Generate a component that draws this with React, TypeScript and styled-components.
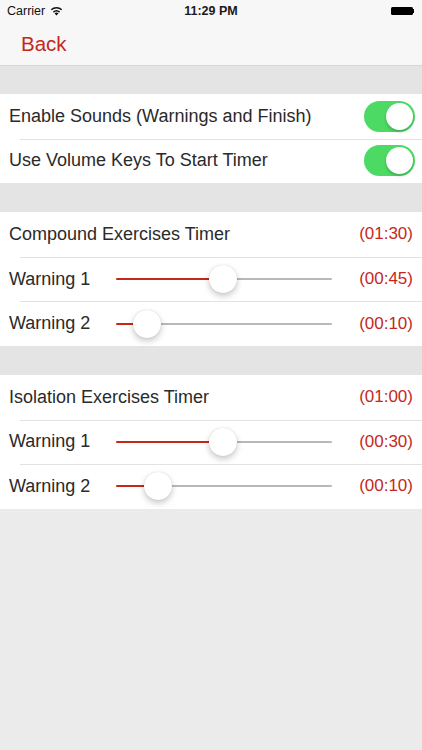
import React from 'react'
import styled, { createGlobalStyle } from 'styled-components'

const RED = '#c4281c'
const FONT = '"Liberation Sans", Arial, sans-serif'

const GlobalStyle = createGlobalStyle`
  html, body { margin: 0; padding: 0; background: #ebebeb; }
  body { font-family: ${FONT}; -webkit-font-smoothing: antialiased; }
`

const Page = styled.div`
  width: 422px;
  min-height: 750px;
  background: #ebebeb;
  display: flex;
  flex-direction: column;
`

const Header = styled.div`
  background: #f7f7f7;
  border-bottom: 1px solid #d6d6d6;
  height: 65px;
  display: flex;
  flex-direction: column;
`

const StatusBar = styled.div`
  height: 21px;
  display: grid;
  grid-template-columns: 1fr auto 1fr;
  align-items: center;
  padding: 0 7px;
  font-size: 12.5px;
  color: #111;
`

const Carrier = styled.div`
  display: flex;
  align-items: center;
  gap: 5px;
`

const Clock = styled.div`
  font-weight: bold;
  font-size: 12.5px;
  color: #1a1a1a;
`

const Battery = styled.div`
  justify-self: end;
  display: flex;
  align-items: center;
  padding-right: 1px;
  & > span:first-child {
    width: 22px;
    height: 8px;
    background: #000;
    border-radius: 1.5px;
  }
  & > span:last-child {
    width: 1.5px;
    height: 4px;
    background: #000;
  }
`

const NavBar = styled.div`
  flex: 1;
  display: flex;
  align-items: center;
  padding: 1px 0 0 21px;
`

const BackButton = styled.button`
  border: none;
  background: transparent;
  padding: 0;
  font-family: ${FONT};
  font-size: 20.5px;
  color: ${RED};
`

const Gap = styled.div<{ $first?: boolean }>`
  height: ${p => (p.$first ? 28 : 29)}px;
  background: #e4e4e4;
`

const Section = styled.div`
  background: #fff;
  display: flex;
  flex-direction: column;
`

const Row = styled.div<{ $first?: boolean }>`
  height: 44.6px;
  display: flex;
  align-items: center;
  padding: 0 8px 0 9px;
  position: relative;
  &::before {
    content: '';
    display: ${p => (p.$first ? 'none' : 'block')};
    position: absolute;
    top: 0;
    left: 20px;
    right: 0;
    height: 1px;
    background: #e2e2e2;
  }
`

const Label = styled.div<{ $w?: number }>`
  font-size: 18px;
  color: #2a2a2a;
  flex: ${p => (p.$w ? `0 0 ${p.$w}px` : '1')};
  white-space: nowrap;
`

const Value = styled.div`
  margin-left: auto;
  font-size: 17px;
  color: ${RED};
  padding-right: 1px;
`

const Toggle = styled.div`
  width: 51px;
  height: 31px;
  border-radius: 16px;
  background: #4cd964;
  position: relative;
  margin-left: auto;
  margin-right: -1px;
  &::after {
    content: '';
    position: absolute;
    right: 2px;
    top: 2px;
    width: 27px;
    height: 27px;
    border-radius: 50%;
    background: #fff;
    box-shadow: 0 2px 3px rgba(0, 0, 0, 0.2);
  }
`

const Track = styled.div`
  width: 216px;
  height: 28px;
  position: relative;
`

const TrackLine = styled.div<{ $red?: boolean }>`
  position: absolute;
  top: 13px;
  height: 2px;
  border-radius: 1px;
  background: ${p => (p.$red ? RED : '#b8b8b8')};
`

const Thumb = styled.div`
  position: absolute;
  top: 0;
  width: 28px;
  height: 28px;
  margin-left: -14px;
  border-radius: 50%;
  background: #fff;
  box-shadow: 0 3px 6px rgba(0, 0, 0, 0.22), 0 0 1px rgba(0, 0, 0, 0.2);
`

const Wifi = () => (
  <svg width="13" height="10" viewBox="0 0 13 10">
    <path d="M6.5 9.6 L4.6 7.4 A2.8 2.8 0 0 1 8.4 7.4 Z" fill="#111" />
    <path d="M3.4 6.1 A4.7 4.7 0 0 1 9.6 6.1" stroke="#111" strokeWidth="1.5" fill="none" />
    <path d="M1.3 3.8 A7.6 7.6 0 0 1 11.7 3.8" stroke="#111" strokeWidth="1.5" fill="none" />
  </svg>
)

const Slider = ({ pos }: { pos: number }) => {
  const x = 14 + pos * 188
  return (
    <Track>
      <TrackLine $red style={{ left: 0, width: x }} />
      <TrackLine style={{ left: x, right: 0 }} />
      <Thumb style={{ left: x }} />
    </Track>
  )
}

type Timer = {
  title: string
  total: string
  warnings: { label: string; value: string; pos: number }[]
}

const timers: Timer[] = [
  {
    title: 'Compound Exercises Timer',
    total: '(01:30)',
    warnings: [
      { label: 'Warning 1', value: '(00:45)', pos: 0.495 },
      { label: 'Warning 2', value: '(00:10)', pos: 0.09 },
    ],
  },
  {
    title: 'Isolation Exercises Timer',
    total: '(01:00)',
    warnings: [
      { label: 'Warning 1', value: '(00:30)', pos: 0.497 },
      { label: 'Warning 2', value: '(00:10)', pos: 0.147 },
    ],
  },
]

export default function App() {
  return (
    <Page>
      <GlobalStyle />
      <Header>
        <StatusBar>
          <Carrier>
            Carrier <Wifi />
          </Carrier>
          <Clock>11:29 PM</Clock>
          <Battery>
            <span />
            <span />
          </Battery>
        </StatusBar>
        <NavBar>
          <BackButton>Back</BackButton>
        </NavBar>
      </Header>

      <Gap $first />
      <Section>
        <Row $first>
          <Label>Enable Sounds (Warnings and Finish)</Label>
          <Toggle />
        </Row>
        <Row>
          <Label>Use Volume Keys To Start Timer</Label>
          <Toggle />
        </Row>
      </Section>

      {timers.map(t => (
        <React.Fragment key={t.title}>
          <Gap />
          <Section>
            <Row $first>
              <Label>{t.title}</Label>
              <Value>{t.total}</Value>
            </Row>
            {t.warnings.map(w => (
              <Row key={w.label}>
                <Label $w={107}>{w.label}</Label>
                <Slider pos={w.pos} />
                <Value>{w.value}</Value>
              </Row>
            ))}
          </Section>
        </React.Fragment>
      ))}
    </Page>
  )
}
